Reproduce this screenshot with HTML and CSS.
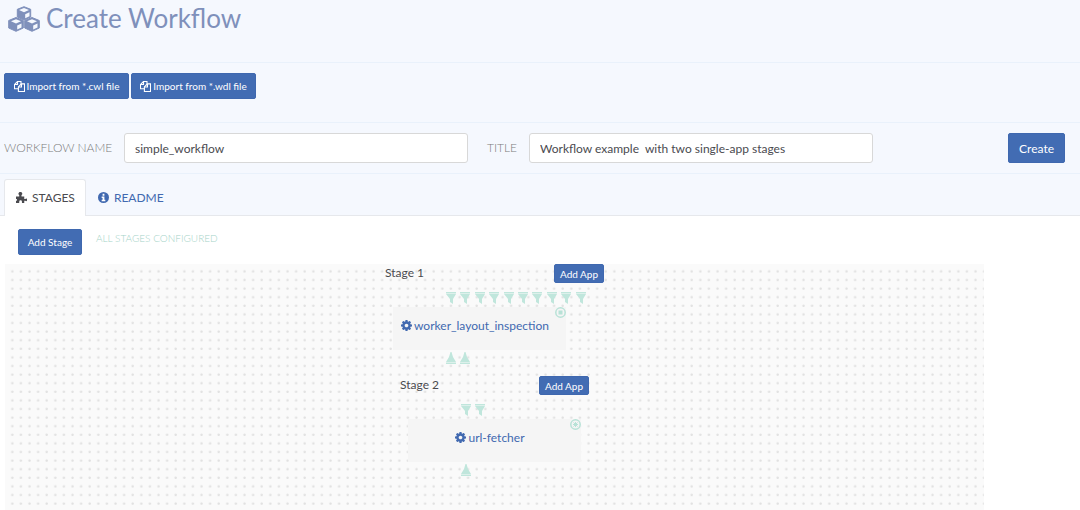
FILE: index.html
```html
<!DOCTYPE html>
<html lang="en">

<head>
    <meta charset="UTF-8">
    <meta name="viewport" content="width=device-width, initial-scale=1.0">
    <title>Create Workflow</title>
    <link rel="stylesheet" href="styles.css">
</head>

<body>
    <!-- shared icons -->
    <svg class="defs" width="0" height="0" aria-hidden="true">
        <symbol id="copy" viewBox="0 0 14 14">
            <path d="M4.5 3.5V.6h4.4v9.2H.6V4.6L4.5.6M.6 4.5h3.9V.6" fill="none" stroke="currentColor" stroke-width="1.4" />
            <path d="M5.6 7.6L9.4 3.6h4v9.8H5.6z" fill="#426cb3" stroke="currentColor" stroke-width="1.4" />
            <path d="M5.6 7.6h3.9v-4" fill="none" stroke="currentColor" stroke-width="1.4" />
        </symbol>
        <symbol id="cog" viewBox="0 -128 1536 1536">
            <path fill="currentColor" d="M1024 640q0-106-75-181t-181-75-181 75-75 181 75 181 181 75 181-75 75-181zm512-109v222q0 12-8 23t-20 13l-185 28q-19 54-39 91 35 50 107 138 10 12 10 25t-9 23q-27 37-99 108t-94 71q-12 0-26-9l-138-108q-44 23-91 38-16 136-29 186-7 28-36 28h-222q-14 0-24.5-8.5t-11.5-21.5l-28-184q-49-16-90-37l-141 107q-10 9-25 9-14 0-25-11-126-114-165-168-7-10-7-23 0-12 8-23 15-21 51-66.5t54-70.5q-27-50-41-99l-183-27q-13-2-21-12.5t-8-23.5v-222q0-12 8-23t19-13l186-28q14-46 39-92-40-57-107-138-10-12-10-24 0-10 9-23 26-36 98.5-107.5t94.5-71.5q13 0 26 10l138 107q44-23 91-38 16-136 29-186 7-28 36-28h222q14 0 24.5 8.5t11.5 21.5l28 184q49 16 90 37l142-107q9-9 24-9 13 0 25 10 129 119 165 170 7 8 7 22 0 12-8 23-15 21-51 66.5t-54 70.5q26 50 41 98l183 28q13 2 21 12.5t8 23.5z" />
        </symbol>
        <symbol id="port-in" viewBox="0 0 10 12">
            <path fill="currentColor" d="M0 0h10v1H0zM0 2h10L7 7v5L4 10V7z" />
            <path fill="currentColor" opacity=".5" d="M0 1h10v1H0z" />
        </symbol>
        <symbol id="port-out" viewBox="0 0 10 12">
            <path fill="currentColor" d="M4.5 0h1L7 5l3 5H0l3-5zM0 11h10v1H0z" />
            <path fill="currentColor" opacity=".5" d="M0 10h10v1H0z" />
        </symbol>
    </svg>

    <header class="page-header">
        <svg class="logo" viewBox="0 0 32 26" aria-hidden="true">
            <g fill="#7f90bb" stroke="#7f90bb" stroke-linejoin="round">
                <path d="M16 .7l6.700 2.600v7.700L16 14l-6.700-3V3.300z" />
                <path d="M8 11.500l7.300 3v7.500L8 25.300.700 22v-7.500z" />
                <path d="M24 11.500l7.300 3v7.500L24 25.300 16.700 22v-7.500z" />
            </g>
            <g fill="#f5f8fe">
                <path d="M16 2l5 2-5 2.200L11 4zM17.200 8.200l4.300-1.900v3.900l-4.300 2z" />
                <path d="M8 13.200l5 2-5 2.200-5-2.200zM9.200 19.400l4.300-1.900v3.900l-4.300 2z" />
                <path d="M24 13.200l5 2-5 2.200-5-2.200zM25.200 19.400l4.300-1.900v3.900l-4.300 2z" />
            </g>
        </svg>
        <h1>Create Workflow</h1>
    </header>

    <div class="import-bar">
        <button type="button" class="btn btn-sm"><svg class="icon"><use href="#copy" /></svg>Import from *.cwl file</button>
        <button type="button" class="btn btn-sm"><svg class="icon"><use href="#copy" /></svg>Import from *.wdl file</button>
    </div>

    <form class="workflow-form">
        <label for="name">WORKFLOW NAME</label>
        <input type="text" id="name" value="simple_workflow">
        <label for="title" class="label-title">TITLE</label>
        <input type="text" id="title" value="Workflow example  with two single-app stages">
        <button type="button" class="btn btn-create">Create</button>
    </form>

    <nav class="tabs">
        <a href="#stages" class="tab active">
            <svg class="icon" viewBox="0 0 12 12" aria-hidden="true">
                <path fill="currentColor" d="M0 5h3.500V3.400A2 2 0 1 1 6 3.400V5h3v2.500h1.200a1.400 1.400 0 1 1 0 2H9V12H6.500v-1.500a1.500 1.500 0 0 0-3 0V12H0V9.500h1V7.500H0z" />
            </svg>
            STAGES
        </a>
        <a href="#readme" class="tab">
            <svg class="icon" viewBox="0 0 12 12" aria-hidden="true">
                <circle cx="6" cy="6" r="6" fill="currentColor" />
                <path fill="#fff" d="M5 2h2v2H5zM4 5h3v3.500h1V10H4V8.500h1v-2H4z" />
            </svg>
            README
        </a>
    </nav>

    <main id="stages">
        <div class="toolbar">
            <button type="button" class="btn btn-sm">Add Stage</button>
            <span class="status">ALL STAGES CONFIGURED</span>
        </div>

        <div class="canvas">
            <section class="stage stage-wide">
                <div class="stage-head">
                    <h2>Stage 1</h2>
                    <button type="button" class="btn btn-xs">Add App</button>
                </div>
                <div class="ports">
                    <svg><use href="#port-in" /></svg>
                    <svg><use href="#port-in" /></svg>
                    <svg><use href="#port-in" /></svg>
                    <svg><use href="#port-in" /></svg>
                    <svg><use href="#port-in" /></svg>
                    <svg><use href="#port-in" /></svg>
                    <svg><use href="#port-in" /></svg>
                    <svg><use href="#port-in" /></svg>
                    <svg><use href="#port-in" /></svg>
                    <svg><use href="#port-in" /></svg>
                </div>
                <div class="app">
                    <a href="#app-1"><svg class="icon"><use href="#cog" /></svg>worker_layout_inspection</a>
                    <svg class="badge" viewBox="0 0 11 11" aria-hidden="true">
                        <circle cx="5.5" cy="5.5" r="4.7" fill="none" stroke="currentColor" stroke-width="1.5" />
                        <rect x="3.5" y="3.5" width="4" height="4" fill="currentColor" />
                    </svg>
                </div>
                <div class="ports">
                    <svg><use href="#port-out" /></svg>
                    <svg><use href="#port-out" /></svg>
                </div>
            </section>

            <section class="stage">
                <div class="stage-head">
                    <h2>Stage 2</h2>
                    <button type="button" class="btn btn-xs">Add App</button>
                </div>
                <div class="ports">
                    <svg><use href="#port-in" /></svg>
                    <svg><use href="#port-in" /></svg>
                </div>
                <div class="app">
                    <a href="#app-2"><svg class="icon"><use href="#cog" /></svg>url-fetcher</a>
                    <svg class="badge" viewBox="0 0 11 11" aria-hidden="true">
                        <circle cx="5.5" cy="5.5" r="4.7" fill="none" stroke="currentColor" stroke-width="1.5" />
                        <path d="M3.5 3.5l4 4M7.5 3.5l-4 4M5.5 3v5M3 5.5h5" stroke="currentColor" />
                    </svg>
                </div>
                <div class="ports">
                    <svg><use href="#port-out" /></svg>
                </div>
            </section>
        </div>
    </main>
</body>

</html>
```
FILE: styles.css
```css
* {
    box-sizing: border-box;
}

html,
body {
    height: 100%;
    margin: 0;
}

body {
    display: flex;
    flex-direction: column;
    overflow: hidden;
    background: #f5f8fe;
    color: #4a4a4f;
    font-family: Lato, "Liberation Sans", sans-serif;
    font-size: 12px;
}

h1,
h2 {
    margin: 0;
    font-weight: 400;
}

a {
    color: #4169b0;
    text-decoration: none;
}

.defs {
    position: absolute;
}

.icon {
    width: 11px;
    height: 11px;
    flex: none;
}

/* buttons */
.btn {
    display: inline-flex;
    align-items: center;
    justify-content: center;
    gap: 2px;
    padding: 0 8px;
    border: 1px solid #3f68af;
    border-radius: 2px;
    background: #426cb3;
    color: #fff;
    font-family: inherit;
    font-size: 12px;
    white-space: nowrap;
}

.btn-sm {
    height: 26px;
    font-size: 10px;
}

.import-bar .btn {
    min-width: 125px;
}

.btn-xs {
    height: 19px;
    min-width: 50px;
    padding: 0 4px;
    font-size: 10px;
}

.btn-create {
    height: 30px;
    padding: 0 10px;
    justify-self: end;
}

/* header */
.page-header {
    display: flex;
    gap: 6px;
    height: 63px;
    padding: 6px 8px 0;
    border-bottom: 1px solid #e9f1fb;
}

.page-header .logo {
    width: 32px;
    height: 26px;
}

.page-header h1 {
    color: #7f90bb;
    font-size: 26px;
    line-height: 24px;
}

.import-bar {
    display: flex;
    gap: 2px;
    padding: 10px 4px 23px;
    border-bottom: 1px solid #e9f1fb;
}

/* name and title */
.workflow-form {
    display: grid;
    grid-template-columns: 120px 43fr 61px 43fr 24fr;
    align-items: center;
    padding: 10px 15px 10px 4px;
    border-bottom: 1px solid #e9f1fb;
}

.workflow-form label {
    padding-bottom: 2px;
    color: #7c7c7c;
    font-size: 12px;
    font-weight: 300;
}

.workflow-form .label-title {
    padding-left: 19px;
}

.workflow-form input {
    width: 100%;
    min-width: 0;
    height: 30px;
    padding: 0 10px;
    border: 1px solid #d8d8d8;
    border-radius: 3px;
    background: #fff;
    color: #4a4a4f;
    font-family: inherit;
    font-size: 12px;
}

/* tabs */
.tabs {
    display: flex;
    padding: 5px 4px 0;
    border-bottom: 1px solid #e6e8ec;
}

.tab {
    display: flex;
    align-items: center;
    gap: 5px;
    height: 37px;
    margin-bottom: -1px;
    padding: 0 10px 2px 11px;
    border: 1px solid transparent;
    border-bottom: 0;
    border-radius: 3px 3px 0 0;
}

.tab.active {
    border-color: #e6e8ec;
    background: #fff;
    color: #4a4a4f;
}

/* stages */
main {
    display: flex;
    flex: 1;
    flex-direction: column;
    background: #fff;
}

.toolbar {
    display: flex;
    gap: 14px;
    padding: 13px 18px 9px;
}

.toolbar .btn {
    min-width: 64px;
}

.status {
    padding-top: 3px;
    color: #a5d3c8;
    font-size: 10px;
    font-weight: 300;
}

.canvas {
    display: flex;
    flex: 1;
    flex-direction: column;
    align-items: center;
    gap: 12px;
    margin: 0 96px 0 5px;
    background: #fafafa url("data:image/svg+xml,%3Csvg xmlns='http://www.w3.org/2000/svg' width='43' height='43' viewBox='0 0 5 5'%3E%3Cdefs%3E%3Cpattern id='d' width='1' height='1' patternUnits='userSpaceOnUse'%3E%3Ccircle cx='.85' cy='.85' r='.14' fill='%23e0e0e0'/%3E%3C/pattern%3E%3C/defs%3E%3Crect width='5' height='5' fill='url(%23d)'/%3E%3C/svg%3E");
}

.stage {
    width: 189px;
}

.stage-wide {
    width: 219px;
}

.stage-head {
    display: flex;
    align-items: center;
    justify-content: space-between;
    margin-bottom: 9px;
}

.stage-head h2 {
    padding-bottom: 2px;
    font-size: 12px;
}

.ports {
    display: grid;
    grid-template-columns: repeat(10, 1fr);
    width: 144px;
    margin-left: 61px;
    color: #c0e6dc;
}

.ports svg {
    width: 10px;
    height: 12px;
}

.app {
    position: relative;
    display: flex;
    justify-content: center;
    width: 173px;
    height: 43px;
    margin: 3px 0 2px 8px;
    padding-right: 9px;
    background: #f5f5f5;
}

.app a {
    display: flex;
    align-items: center;
    gap: 2px;
    height: 37px;
}

.badge {
    position: absolute;
    top: 0;
    right: 0;
    width: 11px;
    height: 11px;
    color: #b8e2d7;
}
```
